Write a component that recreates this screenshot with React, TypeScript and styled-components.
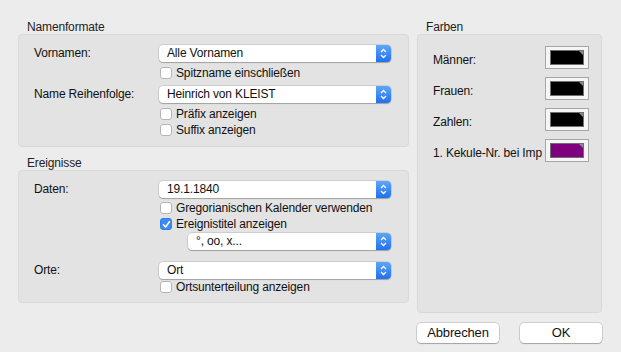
import React from "react";
import styled, { createGlobalStyle } from "styled-components";

const Global = createGlobalStyle`
  html, body { margin: 0; padding: 0; background: #ececec; }
  body { font-family: "Liberation Sans", Arial, sans-serif; font-size: 12px; letter-spacing: -0.15px; color: #111; }
`;

const Window = styled.div`
  width: 621px;
  height: 352px;
  box-sizing: border-box;
  padding: 20px 19px 0 18px;
  display: grid;
  grid-template-columns: 391px 185px;
  grid-template-rows: auto auto;
  column-gap: 8px;
  background: #ececec;
`;

const Column = styled.div`
  display: flex;
  flex-direction: column;
`;

const SectionTitle = styled.div<{ $mt?: number }>`
  height: 14px;
  line-height: 14px;
  padding-left: 9px;
  margin-top: ${(p) => p.$mt ?? 0}px;
  color: #222;
`;

const Box = styled.div<{ $pt: number; $pb: number; $grow?: boolean }>`
  background: #e3e3e3;
  border: 1px solid #d9d9d9;
  border-radius: 4px;
  padding: ${(p) => p.$pt}px 17px ${(p) => p.$pb}px 14px;
  ${(p) => (p.$grow ? "flex: 1;" : "")}
`;

const FormGrid = styled.div`
  display: grid;
  grid-template-columns: 126px 1fr;
  align-items: start;
`;

const Label = styled.div<{ $mt?: number }>`
  height: 17px;
  line-height: 17px;
  padding-left: 1px;
  margin-top: ${(p) => p.$mt ?? 0}px;
`;

const Controls = styled.div`
  display: flex;
  flex-direction: column;
`;

const PopupBox = styled.div<{ $mt?: number; $ml?: number }>`
  height: 17px;
  margin-top: ${(p) => p.$mt ?? 0}px;
  margin-left: ${(p) => p.$ml ?? 0}px;
  background: #fff;
  border-radius: 4px;
  box-shadow: 0 0 0 0.5px rgba(0, 0, 0, 0.18), 0 1px 1px rgba(0, 0, 0, 0.22);
  display: flex;
  align-items: center;
  overflow: hidden;
`;

const PopupText = styled.span`
  flex: 1;
  padding-left: 8px;
  line-height: 17px;
  white-space: nowrap;
`;

const PopupCap = styled.span`
  width: 15px;
  height: 17px;
  background: linear-gradient(#5ea5fb, #1f71ee);
  display: flex;
  align-items: center;
  justify-content: center;
`;

const Popup: React.FC<{ text: string; mt?: number; ml?: number }> = ({ text, mt, ml }) => (
  <PopupBox $mt={mt} $ml={ml}>
    <PopupText>{text}</PopupText>
    <PopupCap>
      <svg width="7" height="11" viewBox="0 0 7 11">
        <path d="M1 4 L3.5 1.5 L6 4 M1 7 L3.5 9.5 L6 7" fill="none" stroke="#fff" strokeWidth="1.3" />
      </svg>
    </PopupCap>
  </PopupBox>
);

const CheckRow = styled.label<{ $mt?: number }>`
  height: 16px;
  margin-top: ${(p) => p.$mt ?? 0}px;
  display: flex;
  align-items: center;
  gap: 4px;
  padding-left: 1px;
  white-space: nowrap;
`;

const Box12 = styled.span<{ $on?: boolean }>`
  width: 12px;
  height: 12px;
  box-sizing: border-box;
  border-radius: 3px;
  background: ${(p) => (p.$on ? "#3a8bf6" : "#fff")};
  border: 1px solid ${(p) => (p.$on ? "#2f7ee8" : "#b5b5b5")};
  display: flex;
  align-items: center;
  justify-content: center;
`;

const Check: React.FC<{ label: string; on?: boolean; mt?: number }> = ({ label, on, mt }) => (
  <CheckRow $mt={mt}>
    <Box12 $on={on}>
      {on && (
        <svg width="9" height="9" viewBox="0 0 9 9">
          <path d="M1.5 4.8 L3.6 7 L7.6 1.6" fill="none" stroke="#fff" strokeWidth="1.6" strokeLinecap="round" strokeLinejoin="round" />
        </svg>
      )}
    </Box12>
    <span>{label}</span>
  </CheckRow>
);

const ColorGrid = styled.div`
  display: grid;
  grid-template-columns: 109px 44px;
  column-gap: 3px;
  grid-auto-rows: 23px;
  row-gap: 8px;
  align-items: center;
  margin-left: 1px;
`;

const ColorLabel = styled.div`
  padding-top: 4px;
  white-space: nowrap;
  overflow: hidden;
`;

const Well = styled.div`
  width: 44px;
  height: 23px;
  box-sizing: border-box;
  border: 1px solid #a6a6a6;
  background: #f5f5f5;
  padding: 3px 4px;
`;

const Swatch = styled.div<{ $c: string }>`
  position: relative;
  height: 15px;
  box-sizing: border-box;
  border: 1px solid #6e6e6e;
  background: ${(p) => p.$c};
  &::after {
    content: "";
    position: absolute;
    top: 0;
    right: 0;
    border-top: 4px solid #8a8a8a;
    border-left: 4px solid transparent;
  }
`;

const ButtonRow = styled.div`
  grid-column: 2;
  margin-top: 10px;
  display: flex;
  justify-content: space-between;
`;

const Button = styled.button`
  width: 82px;
  height: 20px;
  padding: 0;
  font-family: "Liberation Sans", Arial, sans-serif;
  font-size: 13px;
  letter-spacing: -0.15px;
  color: #111;
  background: #fff;
  border: none;
  border-radius: 4px;
  box-shadow: 0 0 0 0.5px rgba(0, 0, 0, 0.25), 0 1px 1px rgba(0, 0, 0, 0.2);
`;

export default function App() {
  return (
    <>
      <Global />
      <Window>
        <Column>
          <SectionTitle>Namenformate</SectionTitle>
          <Box $pt={10} $pb={8}>
            <FormGrid>
              <Label>Vornamen:</Label>
              <Controls>
                <Popup text="Alle Vornamen" />
                <Check label="Spitzname einschließen" mt={3} />
              </Controls>
              <Label $mt={5}>Name Reihenfolge:</Label>
              <Controls>
                <Popup text="Heinrich von KLEIST" mt={5} />
                <Check label="Präfix anzeigen" mt={3} />
                <Check label="Suffix anzeigen" />
              </Controls>
            </FormGrid>
          </Box>
          <SectionTitle $mt={9}>Ereignisse</SectionTitle>
          <Box $pt={10} $pb={7}>
            <FormGrid>
              <Label>Daten:</Label>
              <Controls>
                <Popup text="19.1.1840" />
                <Check label="Gregorianischen Kalender verwenden" mt={2} />
                <Check label="Ereignistitel anzeigen" on />
                <Popup text="°, oo, x..." mt={1} ml={29} />
              </Controls>
              <Label $mt={12}>Orte:</Label>
              <Controls>
                <Popup text="Ort" mt={12} />
                <Check label="Ortsunterteilung anzeigen" />
              </Controls>
            </FormGrid>
          </Box>
        </Column>
        <Column>
          <SectionTitle>Farben</SectionTitle>
          <Box $pt={11} $pb={8} $grow>
            <ColorGrid>
              <ColorLabel>Männer:</ColorLabel>
              <Well><Swatch $c="#000" /></Well>
              <ColorLabel>Frauen:</ColorLabel>
              <Well><Swatch $c="#000" /></Well>
              <ColorLabel>Zahlen:</ColorLabel>
              <Well><Swatch $c="#000" /></Well>
              <ColorLabel>1. Kekule-Nr. bei Imp</ColorLabel>
              <Well><Swatch $c="#7f007f" /></Well>
            </ColorGrid>
          </Box>
        </Column>
        <ButtonRow>
          <Button>Abbrechen</Button>
          <Button>OK</Button>
        </ButtonRow>
      </Window>
    </>
  );
}
